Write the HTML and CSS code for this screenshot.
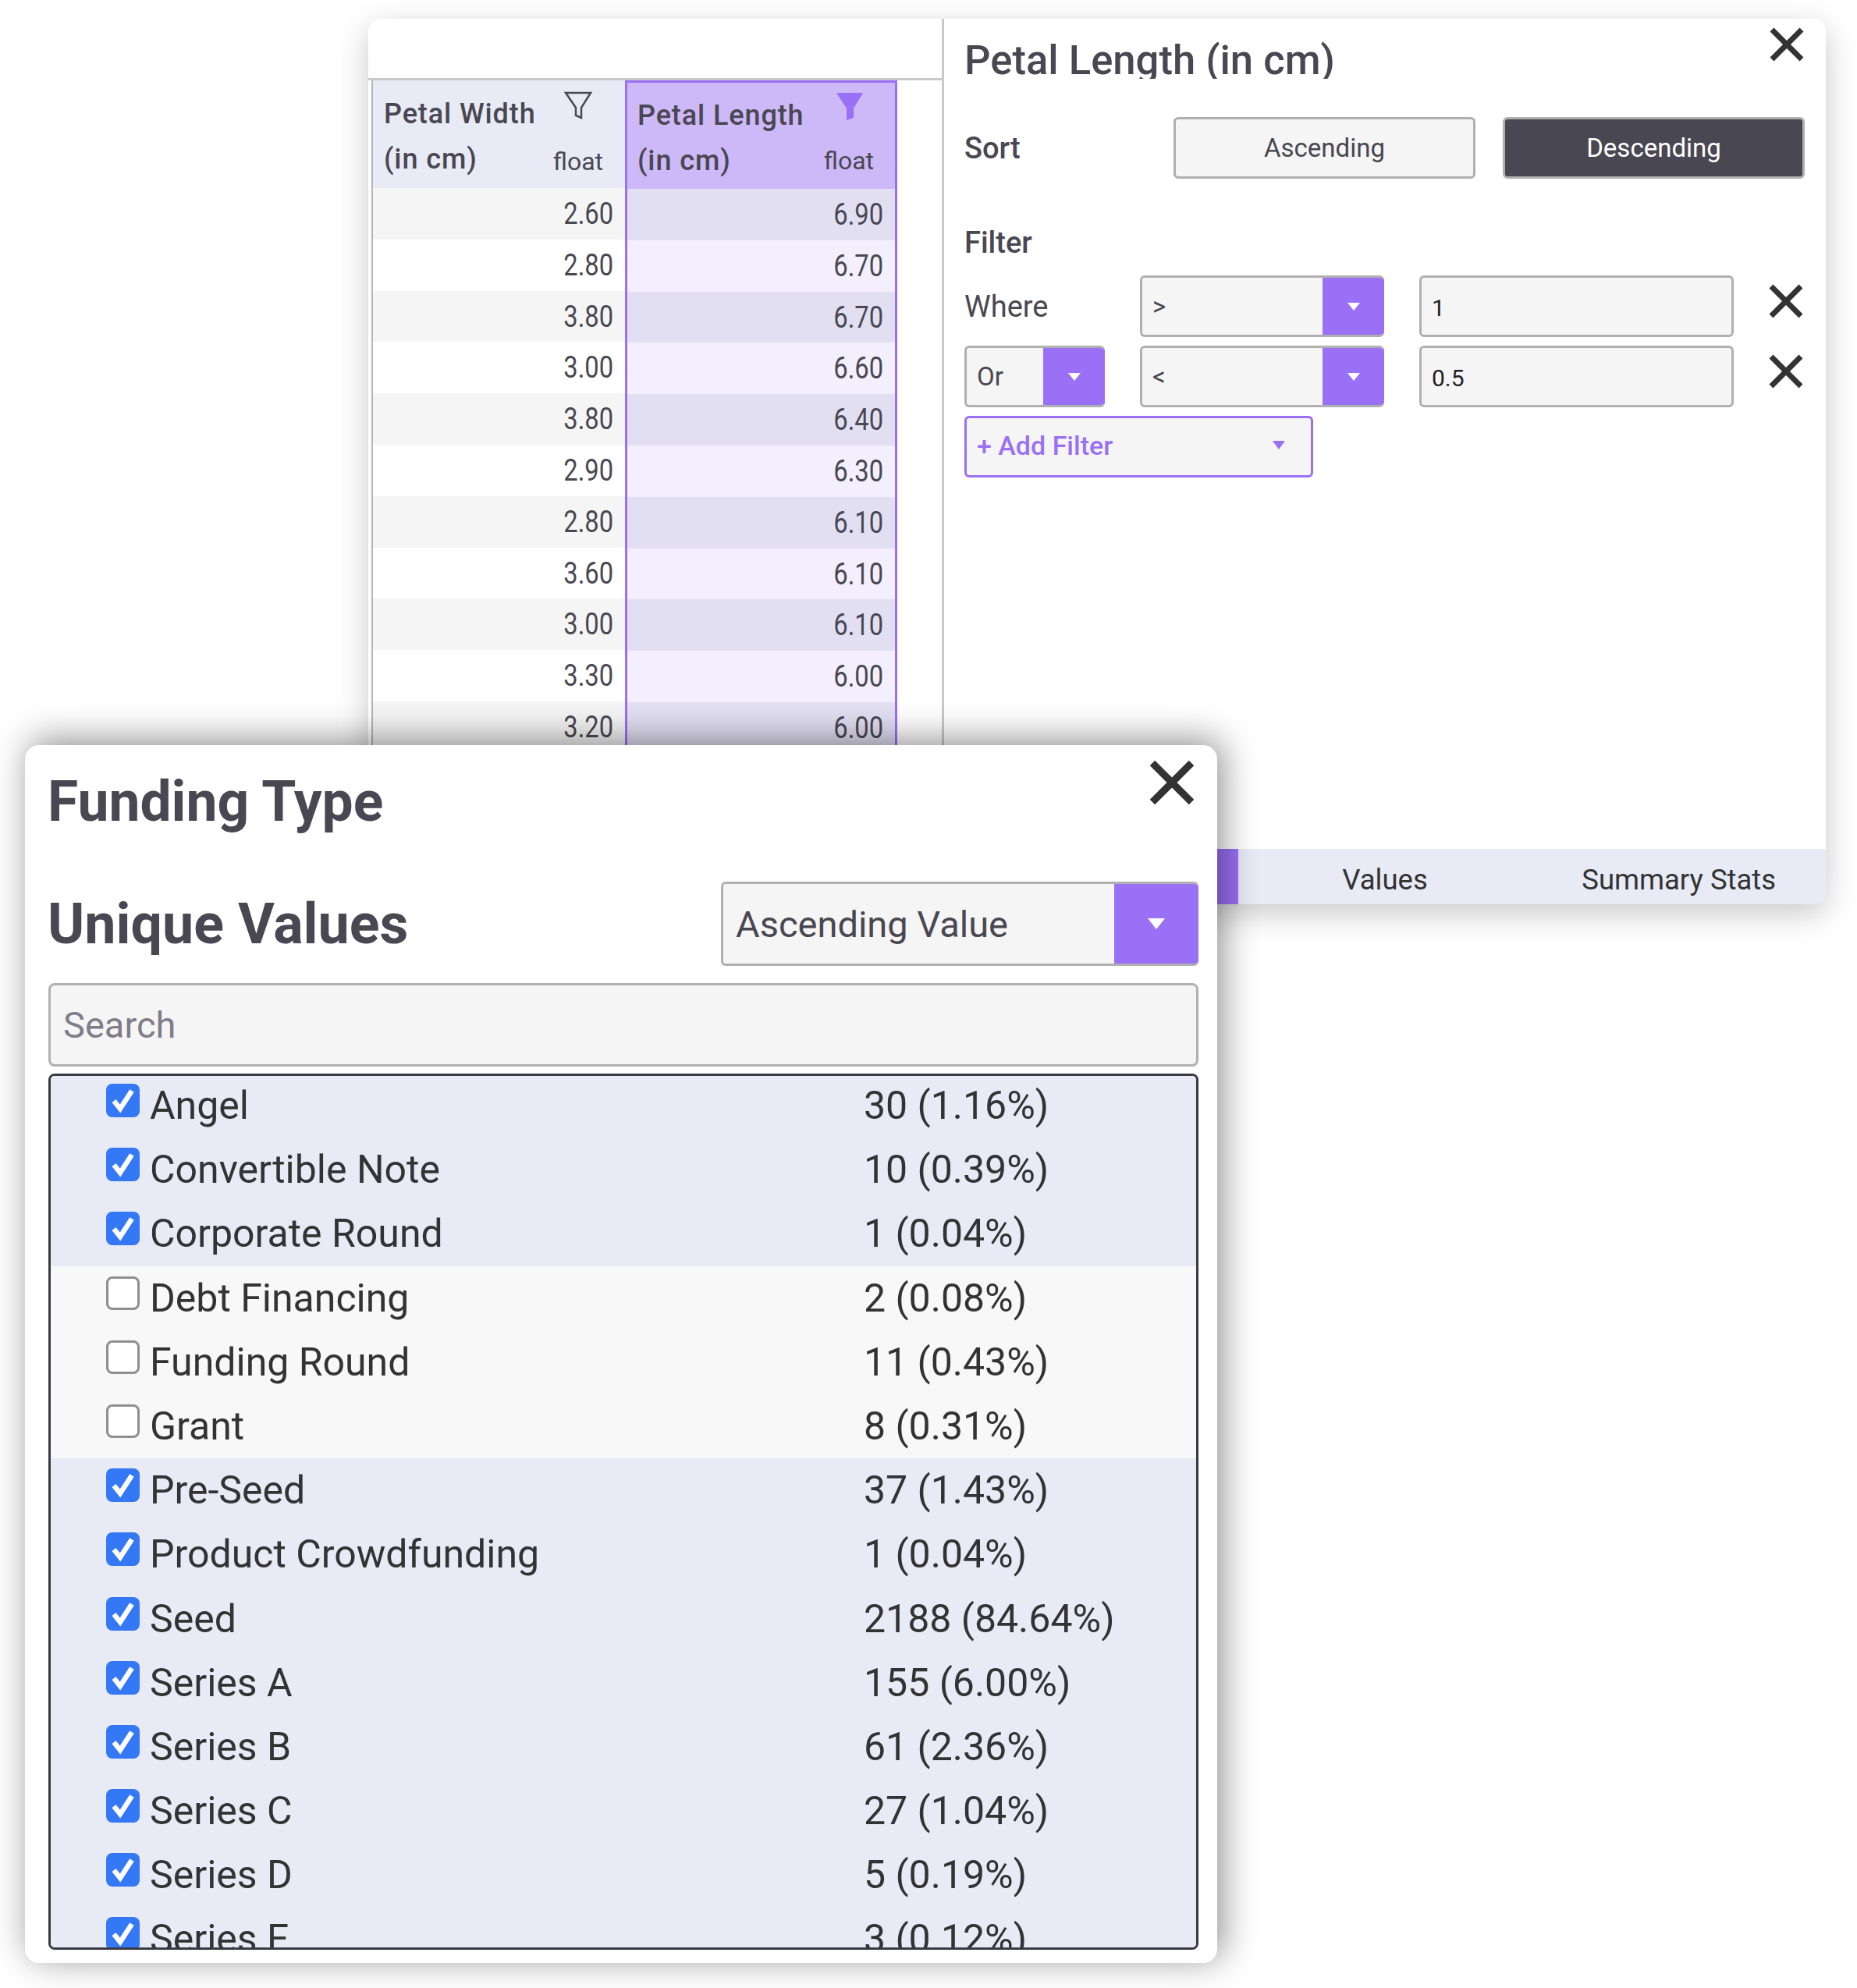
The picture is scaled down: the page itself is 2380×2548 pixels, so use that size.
FILE: index.html
```html
<!DOCTYPE html>
<html lang="en">
<head>
  <meta charset="UTF-8">
  <title>Column controls</title>
  <link rel="stylesheet" href="styles.css">
</head>
<body>
  <svg class="defs" width="0" height="0" aria-hidden="true">
    <symbol id="close" viewBox="0 0 44 44"><path d="M3 3 41 41M41 3 3 41" fill="none" stroke="currentColor" stroke-width="7"/></symbol>
    <symbol id="tick" viewBox="0 0 43 43"><path d="M10 22 18 32 33 9" fill="none" stroke="#fff" stroke-width="6.5"/></symbol>
  </svg>

  <!-- back window: table with the filter panel -->
  <div class="window back">
    <div class="sheet">
      <div class="sheet-top"></div>
      <div class="grid">
        <div class="col">
          <div class="col-head">
            <div class="head-line"><span>Petal Width</span>
              <svg class="funnel" viewBox="0 0 36 36"><path d="M2 2H34L22 21V34L15 31V21Z" fill="none" stroke="#4a4852" stroke-width="2.5"/></svg>
            </div>
            <div class="head-line"><span>(in cm)</span><span class="dtype">float</span></div>
          </div>
          <div class="cell"><span>2.60</span></div>
          <div class="cell"><span>2.80</span></div>
          <div class="cell"><span>3.80</span></div>
          <div class="cell"><span>3.00</span></div>
          <div class="cell"><span>3.80</span></div>
          <div class="cell"><span>2.90</span></div>
          <div class="cell"><span>2.80</span></div>
          <div class="cell"><span>3.60</span></div>
          <div class="cell"><span>3.00</span></div>
          <div class="cell"><span>3.30</span></div>
          <div class="cell"><span>3.20</span></div>
        </div>
        <div class="col col-active">
          <div class="col-head">
            <div class="head-line"><span>Petal Length</span>
              <svg class="funnel" viewBox="0 0 36 36"><path d="M1 1H35L23 21V33L14 36V21Z" fill="#9a70f7"/></svg>
            </div>
            <div class="head-line"><span>(in cm)</span><span class="dtype">float</span></div>
          </div>
          <div class="cell"><span>6.90</span></div>
          <div class="cell"><span>6.70</span></div>
          <div class="cell"><span>6.70</span></div>
          <div class="cell"><span>6.60</span></div>
          <div class="cell"><span>6.40</span></div>
          <div class="cell"><span>6.30</span></div>
          <div class="cell"><span>6.10</span></div>
          <div class="cell"><span>6.10</span></div>
          <div class="cell"><span>6.10</span></div>
          <div class="cell"><span>6.00</span></div>
          <div class="cell"><span>6.00</span></div>
        </div>
      </div>
    </div>

    <div class="side">
      <div class="side-body">
        <div class="side-head">
          <h2 class="side-title">Petal Length (in cm)</h2>
          <svg class="x x-side"><use href="#close"/></svg>
        </div>
        <div class="sort-row">
          <span class="label">Sort</span>
          <div class="sort-btns">
            <button class="btn">Ascending</button>
            <button class="btn btn-on">Descending</button>
          </div>
        </div>
        <div class="label filter-label">Filter</div>
        <div class="filter-row">
          <span class="where">Where</span>
          <div class="dd dd-cond"><span class="dd-val">&gt;</span><span class="dd-arrow"></span></div>
          <div class="field">1</div>
          <svg class="x x-row"><use href="#close"/></svg>
        </div>
        <div class="filter-row">
          <div class="dd dd-or"><span class="dd-val">Or</span><span class="dd-arrow"></span></div>
          <div class="dd dd-cond"><span class="dd-val">&lt;</span><span class="dd-arrow"></span></div>
          <div class="field">0.5</div>
          <svg class="x x-row"><use href="#close"/></svg>
        </div>
        <div class="add-filter"><span>+ Add Filter</span><i class="add-caret"></i></div>
      </div>
      <div class="tabs">
        <div class="tab tab-on"></div>
        <div class="tab">Values</div>
        <div class="tab">Summary Stats</div>
      </div>
    </div>
  </div>

  <!-- front window: unique values -->
  <div class="window front">
    <div class="front-head">
      <h1 class="front-title">Funding Type</h1>
      <svg class="x x-front"><use href="#close"/></svg>
    </div>
    <div class="values-head">
      <h2 class="values-title">Unique Values</h2>
      <div class="dd dd-big"><span class="dd-val">Ascending Value</span><span class="dd-arrow"></span></div>
    </div>
    <div class="search">Search</div>
    <div class="list">
      <div class="row on"><svg class="box"><use href="#tick"/></svg><span class="name">Angel</span><span class="count">30 (1.16%)</span></div>
      <div class="row on"><svg class="box"><use href="#tick"/></svg><span class="name">Convertible Note</span><span class="count">10 (0.39%)</span></div>
      <div class="row on"><svg class="box"><use href="#tick"/></svg><span class="name">Corporate Round</span><span class="count">1 (0.04%)</span></div>
      <div class="row"><span class="box-off"></span><span class="name">Debt Financing</span><span class="count">2 (0.08%)</span></div>
      <div class="row"><span class="box-off"></span><span class="name">Funding Round</span><span class="count">11 (0.43%)</span></div>
      <div class="row"><span class="box-off"></span><span class="name">Grant</span><span class="count">8 (0.31%)</span></div>
      <div class="row on"><svg class="box"><use href="#tick"/></svg><span class="name">Pre-Seed</span><span class="count">37 (1.43%)</span></div>
      <div class="row on"><svg class="box"><use href="#tick"/></svg><span class="name">Product Crowdfunding</span><span class="count">1 (0.04%)</span></div>
      <div class="row on"><svg class="box"><use href="#tick"/></svg><span class="name">Seed</span><span class="count">2188 (84.64%)</span></div>
      <div class="row on"><svg class="box"><use href="#tick"/></svg><span class="name">Series A</span><span class="count">155 (6.00%)</span></div>
      <div class="row on"><svg class="box"><use href="#tick"/></svg><span class="name">Series B</span><span class="count">61 (2.36%)</span></div>
      <div class="row on"><svg class="box"><use href="#tick"/></svg><span class="name">Series C</span><span class="count">27 (1.04%)</span></div>
      <div class="row on"><svg class="box"><use href="#tick"/></svg><span class="name">Series D</span><span class="count">5 (0.19%)</span></div>
      <div class="row on"><svg class="box"><use href="#tick"/></svg><span class="name">Series E</span><span class="count">3 (0.12%)</span></div>
    </div>
  </div>
</body>
</html>
```

FILE: styles.css
```css
* {
  box-sizing: border-box;
}

body {
  margin: 0;
  width: 2380px;
  height: 2548px;
  position: relative;
  overflow: hidden;
  background: #fff;
  font-family: Roboto, sans-serif;
  color: #494751;
}

h1, h2 {
  margin: 0;
}

.defs {
  position: absolute;
}

.window {
  position: absolute;
  background: #fff;
  overflow: hidden;
}

.back {
  left: 472px;
  top: 24px;
  width: 1868px;
  height: 1135px;
  border-radius: 16px;
  display: flex;
  box-shadow: 0 12px 40px rgba(0, 0, 0, 0.22);
}

.front {
  left: 32px;
  top: 955px;
  width: 1528px;
  height: 1561px;
  border-radius: 18px;
  padding: 0 24px 0 30px;
  box-shadow: 6px -6px 46px rgba(0, 0, 0, 0.45);
}

/* table */
.sheet {
  width: 738px;
  border-right: 3px solid #c9c9c9;
  overflow: hidden;
}

.sheet-top {
  height: 79px;
  border-bottom: 3px solid #c9c9c9;
}

.grid {
  display: flex;
  padding-left: 4px;
  height: 1100px;
}

.col {
  width: 325px;
  border-left: 2px solid #b5b5b5;
}

.col-active {
  width: 349px;
  border: 3px solid #9a70f7;
  border-bottom: 0;
}

.col-head {
  height: 138px;
  padding: 14px 28px 0 14px;
  background: #e8eaf6;
  font-size: 36px;
  font-weight: 500;
  letter-spacing: 0.9px;
}

.col-active .col-head {
  height: 136px;
  padding: 13px 27px 0 13px;
  background: #cdb8f8;
}

.head-line {
  display: flex;
  justify-content: space-between;
  align-items: center;
  height: 58px;
}

.funnel {
  width: 36px;
  height: 36px;
  margin: -22px 14px 0 0;
}

.col-active .funnel {
  margin: -24px 13px 0 0;
}

.dtype {
  margin-top: 5px;
  font-size: 32px;
  font-weight: 400;
  letter-spacing: 0;
}

.col-active .dtype {
  margin-top: 0;
}

.cell {
  height: 65.8px;
  line-height: 66px;
  padding-right: 15px;
  text-align: right;
  font-size: 38px;
}

/* the digits in the grid are narrower than plain Roboto */
.cell span {
  display: inline-block;
  transform: scaleX(0.86);
  transform-origin: right center;
}

.cell:nth-child(even) {
  background: #f5f5f5;
}

.col-active .cell {
  background: #f3effe;
}

.col-active .cell:nth-child(even) {
  background: #e3dff3;
}

/* side panel */
.side {
  flex: 1;
  display: flex;
  flex-direction: column;
}

.side-body {
  flex: 1;
  padding: 0 27px 0 26px;
}

.side-head {
  display: flex;
  justify-content: space-between;
  height: 78px;
}

.side-title {
  margin-top: 25px;
  height: 52px;
  overflow: hidden;
  font-size: 52.6px;
  line-height: 56px;
  font-weight: 500;
}

.x {
  color: #333;
  flex: none;
}

.x-side {
  width: 44px;
  height: 44px;
  margin: 11px 1px 0 0;
}

.label {
  font-size: 38px;
  font-weight: 500;
}

.sort-row {
  display: flex;
  align-items: center;
  justify-content: space-between;
  margin-top: 48px;
}

.sort-btns {
  display: flex;
  gap: 35px;
}

.btn {
  width: 387px;
  height: 79px;
  border: 3px solid #b0b0b0;
  border-radius: 6px;
  background: #f5f5f5;
  color: #494751;
  font: 400 33px Roboto, sans-serif;
}

.btn-on {
  background: #494751;
  color: #fff;
}

.filter-label {
  margin-top: 59px;
  line-height: 46px;
}

.filter-row {
  display: flex;
  align-items: center;
  margin-top: 11px;
  height: 79px;
  gap: 45px;
}

.filter-label + .filter-row {
  margin-top: 19px;
}

.where {
  width: 180px;
  font-size: 38px;
}

.dd {
  display: flex;
  height: 79px;
  border: 3px solid #b0b0b0;
  border-right: 0;
  border-radius: 6px;
  background: #f5f5f5;
  overflow: hidden;
  font-size: 33px;
}

.dd-val {
  flex: 1;
  align-self: center;
  padding-left: 13px;
}

.dd-arrow {
  width: 79px;
  margin: -3px 0;
  background: #9a70f7;
  display: flex;
  align-items: center;
  justify-content: center;
  border-radius: 0 6px 6px 0;
}

.dd-arrow::after {
  content: "";
  border: 8px solid transparent;
  border-top: 10px solid #fff;
  border-bottom: 0;
}

.dd-cond {
  width: 313px;
}

.dd-or {
  width: 180px;
}

.field {
  width: 403px;
  height: 79px;
  line-height: 77px;
  padding-left: 13px;
  border: 3px solid #b0b0b0;
  border-radius: 6px;
  background: #f5f5f5;
  font-size: 30px;
  color: #222;
}

.x-row {
  width: 44px;
  height: 44px;
  margin-top: -14px;
}

.add-filter {
  display: flex;
  align-items: center;
  justify-content: space-between;
  margin-top: 11px;
  width: 447px;
  height: 79px;
  padding: 0 33px 4px 13px;
  border: 3px solid #9a70f7;
  border-radius: 6px;
  background: #f5f5f5;
  color: #9a70f7;
  font-size: 34px;
  font-weight: 500;
}

.add-caret {
  border: 8px solid transparent;
  border-top: 11px solid #9a70f7;
  border-bottom: 0;
}

.tabs {
  display: flex;
  height: 71px;
  background: #e8eaf6;
  font-size: 36.5px;
  color: #333;
}

.tab {
  flex: 1;
  text-align: center;
  line-height: 80px;
}

.tab-on {
  background: #9a70f7;
}

/* front window */
.front-head {
  display: flex;
  justify-content: space-between;
  height: 120px;
}

.front-title {
  margin: 33px 0 0 -1px;
  font-size: 71.4px;
  line-height: 80px;
  font-weight: 700;
}

.x-front {
  width: 58px;
  height: 58px;
  margin: 19px 5px 0 0;
}

.values-head {
  display: flex;
  justify-content: space-between;
  align-items: center;
  margin-top: 55px;
  height: 108px;
}

.values-title {
  margin-left: -1px;
  font-size: 71.8px;
  font-weight: 700;
}

.dd-big {
  width: 612px;
  height: 108px;
  font-size: 47px;
}

.dd-big .dd-val {
  padding-left: 16px;
}

.dd-big .dd-arrow {
  width: 108px;
}

.dd-big .dd-arrow::after {
  border-width: 14px 11px 0;
}

.search {
  margin-top: 22px;
  height: 107px;
  line-height: 101px;
  padding-left: 16px;
  border: 3px solid #b0b0b0;
  border-radius: 8px;
  background: #f5f5f5;
  font-size: 47px;
  color: #7f7d88;
}

.list {
  margin-top: 9px;
  height: 1123px;
  border: 3px solid #3a3a42;
  border-radius: 8px;
  overflow: hidden;
  background: #e8eaf6;
  color: #333;
  font-size: 50px;
}

.row {
  display: flex;
  height: 82.2px;
  padding: 10px 0 0 71px;
  background: #f8f8f8;
}

.row:first-child {
  height: 79.2px;
  padding-top: 7px;
}

.row.on {
  background: #e8eaf6;
}

.box,
.box-off {
  flex: none;
  width: 43px;
  height: 43px;
  border-radius: 8px;
  margin-top: 3px;
}

.box {
  background: #3478f6;
}

.box-off {
  background: #fff;
  border: 3px solid #8f8f8f;
}

.name {
  width: 928px;
  padding-left: 13px;
  line-height: 62px;
}

.count {
  line-height: 62px;
}
```
